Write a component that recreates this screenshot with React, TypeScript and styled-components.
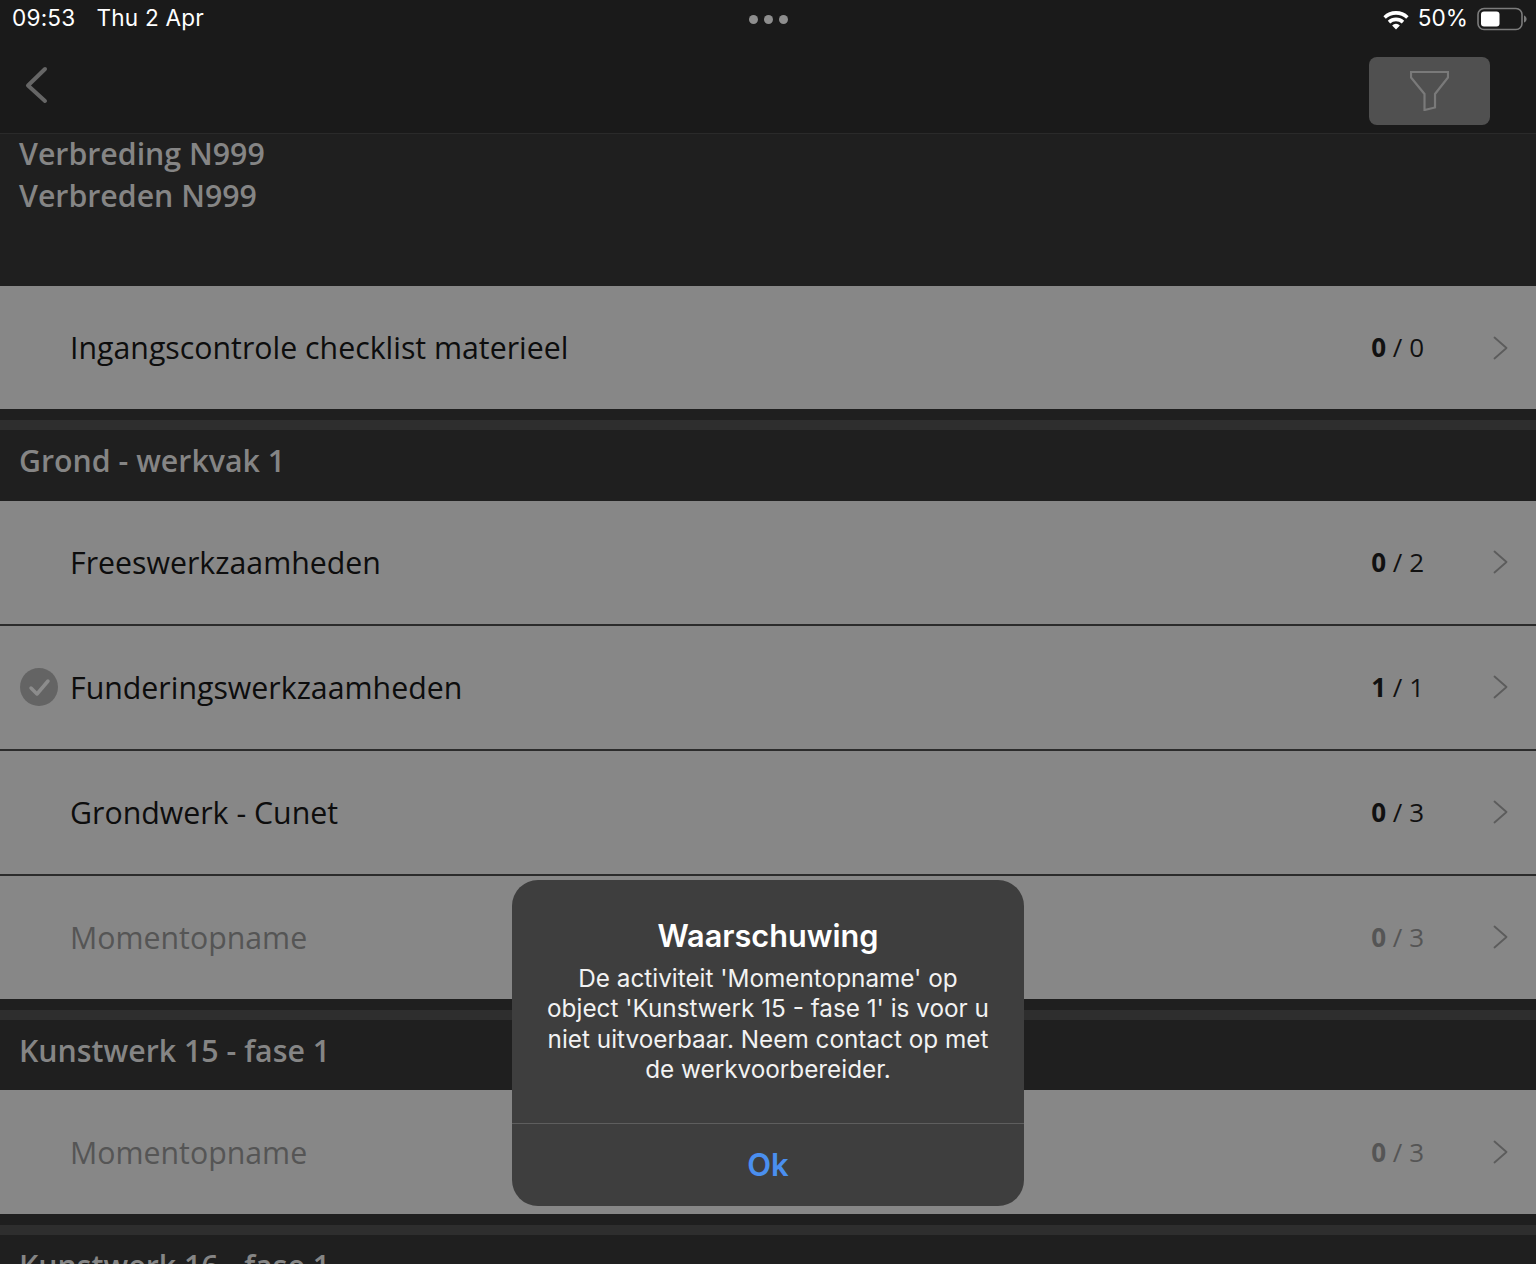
import styled, { createGlobalStyle } from 'styled-components'

const GlobalStyle = createGlobalStyle`
  html, body {
    margin: 0;
    padding: 0;
    background: #1f1f1f;
  }
  body {
    font-family: "Open Sans", "Liberation Sans", sans-serif;
  }
`

const Screen = styled.main`
  position: relative;
  width: 1536px;
  height: 1264px;
  overflow: hidden;
  background: #1f1f1f;
`

const TopBar = styled.header`
  height: 133px;
  background: #1a1a1a;
  border-bottom: 1px solid #2a2a2a;
`

const StatusBar = styled.div`
  display: grid;
  grid-template-columns: 1fr auto 1fr;
  align-items: center;
  height: 38px;
  padding: 0 9px;
  color: #fff;
  font-family: Inter, "Liberation Sans", sans-serif;
  font-size: 22.6px;
`

const StatusLeft = styled.div`
  display: flex;
  gap: 21px;
  padding: 0 0 3px 3px;
  letter-spacing: 0.2px;
`

const Dots = styled.div`
  display: flex;
  gap: 6px;
`

const Dot = styled.span`
  width: 9px;
  height: 9px;
  border-radius: 50%;
  background: #8e8e8e;
`

const StatusRight = styled.div`
  display: flex;
  justify-content: flex-end;
  align-items: center;
  gap: 9px;
`

const BatteryLevel = styled.span`
  padding-bottom: 3px;
`

const NavBar = styled.nav`
  display: flex;
  justify-content: space-between;
  align-items: flex-start;
  padding: 19px 46px 0 24px;
`

const BackButton = styled.div`
  display: flex;
  margin-top: 9px;
`

const FilterButton = styled.div`
  display: flex;
  align-items: center;
  justify-content: center;
  width: 121px;
  height: 68px;
  border-radius: 8px;
  background: #505050;
`

const ProjectHeader = styled.section`
  display: flow-root;
  height: 152px;
  padding: 0 19px;
  color: #858585;
  font-size: 30.3px;
  font-weight: 600;
  line-height: 42px;
  background: #1f1f1f;
`

const ProjectLines = styled.div`
  margin-top: -1px;
`

const Row = styled.div<{ $last?: boolean }>`
  display: grid;
  grid-template-columns: 70px 1fr 120px 91px;
  align-items: center;
  height: ${({ $last }) => ($last ? '123.3px' : '125px')};
  box-sizing: border-box;
  background: #878787;
  border-bottom: ${({ $last }) => ($last ? '0' : '2px solid #2b2b2b')};
`

const CheckSlot = styled.div`
  display: flex;
  padding-left: 20px;
`

const RowTitle = styled.div<{ $disabled?: boolean }>`
  color: ${({ $disabled }) => ($disabled ? '#555' : '#0d0d0d')};
  font-size: 30.3px;
`

const Count = styled.div<{ $disabled?: boolean }>`
  padding: 0 21px 1px 0;
  color: ${({ $disabled }) => ($disabled ? '#555' : '#111')};
  font-size: 26px;
  text-align: right;
  white-space: pre;

  b {
    font-weight: 700;
  }
`

const Chevron = styled.div`
  display: flex;
  justify-content: flex-end;
  padding-right: 28px;
`

const GroupHeader = styled.section`
  background: #1f1f1f;
`

const Stripe = styled.div`
  height: 10px;
  margin-top: 11px;
  background: #2e2e2e;
`

const GroupTitle = styled.h2`
  display: flex;
  align-items: center;
  height: 70.4px;
  box-sizing: border-box;
  margin: 0;
  padding: 0 19px 9px;
  color: #858585;
  font-size: 30.3px;
  font-weight: 600;
`

const Alert = styled.div`
  position: absolute;
  left: 512px;
  top: 880px;
  width: 512px;
  height: 326px;
  display: flex;
  flex-direction: column;
  border-radius: 26px;
  background: #3e3e3e;
  color: #fff;
  font-family: Inter, "Liberation Sans", sans-serif;
  text-align: center;
`

const AlertBody = styled.div`
  height: 244px;
  box-sizing: border-box;
  padding-top: 36px;
  border-bottom: 1px solid #5e5e5e;
`

const AlertTitle = styled.div`
  font-size: 30.7px;
  font-weight: 600;
  line-height: 40px;
`

const AlertText = styled.div`
  margin-top: 7px;
  font-size: 24.3px;
  line-height: 30.3px;
  color: #f2f2f2;
`

const AlertAction = styled.div`
  flex: 1;
  display: flex;
  align-items: center;
  justify-content: center;
  padding-bottom: 2px;
  color: #4a8fef;
  font-size: 31px;
  font-weight: 600;
`

const ChevronRight = () => (
  <svg width="15" height="24" viewBox="0 0 15 24" fill="none">
    <path d="M1.5 1.5L13.5 12L1.5 22.5" stroke="#5c5c5c" strokeWidth="1.8" strokeLinecap="round" strokeLinejoin="round" />
  </svg>
)

const CheckBadge = () => (
  <svg width="38" height="38" viewBox="0 0 38 38">
    <circle cx="19" cy="19" r="19" fill="#646464" />
    <path d="M11 20l6 6 11-13" fill="none" stroke="#8c8c8c" strokeWidth="3.5" strokeLinecap="round" strokeLinejoin="round" />
  </svg>
)

const Wifi = () => (
  <svg width="26" height="21" viewBox="1 0 24 20">
    <path d="M1 6.8a17.4 17.4 0 0 1 24 0l-2.3 2.6a14 14 0 0 0-19.4 0z" fill="#fff" />
    <path d="M5.2 11.2a11.4 11.4 0 0 1 15.6 0l-2.3 2.6a8 8 0 0 0-11 0z" fill="#fff" />
    <path d="M9.3 15.6a5.4 5.4 0 0 1 7.4 0L13 19.6z" fill="#fff" />
  </svg>
)

const Battery = () => (
  <svg width="50" height="24" viewBox="0 0 50 24">
    <rect x="1" y="1.5" width="44" height="21" rx="6" fill="none" stroke="#7c7c7c" strokeWidth="1.6" />
    <rect x="4" y="4.5" width="18.5" height="15" rx="3" fill="#fff" />
    <path d="M47 8.5c1.6.5 2.6 2 2.6 3.5s-1 3-2.6 3.5z" fill="#7c7c7c" />
  </svg>
)

const BackIcon = () => (
  <svg width="24" height="38" viewBox="0 0 24 38" fill="none">
    <path d="M21 3L4 19.5 21 35" stroke="#666" strokeWidth="4" strokeLinecap="round" strokeLinejoin="round" />
  </svg>
)

const FunnelIcon = () => (
  <svg width="39" height="40" viewBox="0 0 39 40" fill="none">
    <path d="M1 1h37v5.5L25 23v13.5L14.5 39V23L1 6.5z" stroke="#7a7a7a" strokeWidth="2.2" strokeLinejoin="miter" />
  </svg>
)

interface ItemProps {
  title: string
  done: number
  total: number
  disabled?: boolean
  checked?: boolean
  last?: boolean
}

const Item = ({ title, done, total, disabled, checked, last }: ItemProps) => (
  <Row $last={last}>
    <CheckSlot>{checked && <CheckBadge />}</CheckSlot>
    <RowTitle $disabled={disabled}>{title}</RowTitle>
    <Count $disabled={disabled}>
      <b>{done}</b> / {total}
    </Count>
    <Chevron>
      <ChevronRight />
    </Chevron>
  </Row>
)

const Group = ({ title }: { title: string }) => (
  <GroupHeader>
    <Stripe />
    <GroupTitle>{title}</GroupTitle>
  </GroupHeader>
)

export default function App() {
  return (
    <Screen>
      <GlobalStyle />
      <TopBar>
        <StatusBar>
          <StatusLeft>
            <span>09:53</span>
            <span>Thu 2 Apr</span>
          </StatusLeft>
          <Dots>
            <Dot />
            <Dot />
            <Dot />
          </Dots>
          <StatusRight>
            <Wifi />
            <BatteryLevel>50%</BatteryLevel>
            <Battery />
          </StatusRight>
        </StatusBar>
        <NavBar>
          <BackButton>
            <BackIcon />
          </BackButton>
          <FilterButton>
            <FunnelIcon />
          </FilterButton>
        </NavBar>
      </TopBar>
      <ProjectHeader>
        <ProjectLines>
          <div>Verbreding N999</div>
          <div>Verbreden N999</div>
        </ProjectLines>
      </ProjectHeader>
      <Item title="Ingangscontrole checklist materieel" done={0} total={0} last />
      <Group title="Grond - werkvak 1" />
      <Item title="Freeswerkzaamheden" done={0} total={2} />
      <Item title="Funderingswerkzaamheden" done={1} total={1} checked />
      <Item title="Grondwerk - Cunet" done={0} total={3} />
      <Item title="Momentopname" done={0} total={3} disabled last />
      <Group title="Kunstwerk 15 - fase 1" />
      <Item title="Momentopname" done={0} total={3} disabled last />
      <Group title="Kunstwerk 16 - fase 1" />
      <Alert>
        <AlertBody>
          <AlertTitle>Waarschuwing</AlertTitle>
          <AlertText>
            De activiteit 'Momentopname' op
            <br />
            object 'Kunstwerk 15 - fase 1' is voor u
            <br />
            niet uitvoerbaar. Neem contact op met
            <br />
            de werkvoorbereider.
          </AlertText>
        </AlertBody>
        <AlertAction>Ok</AlertAction>
      </Alert>
    </Screen>
  )
}
